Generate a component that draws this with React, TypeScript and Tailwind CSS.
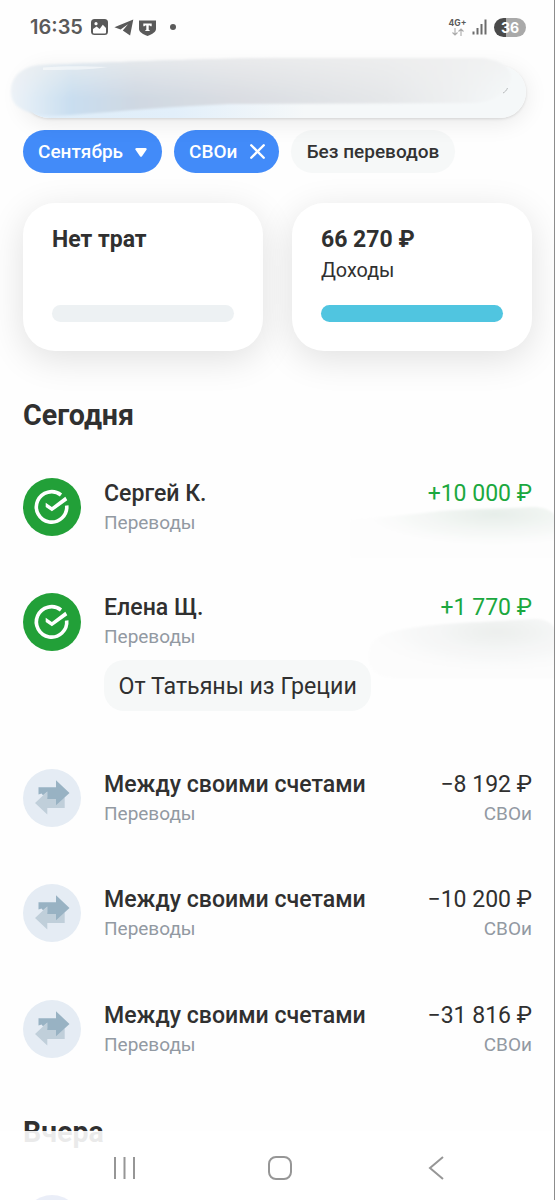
import { X } from "lucide-react";

const transactions = [
  {
    name: "Сергей К.",
    category: "Переводы",
    amount: "+10 000 ₽",
    income: true,
    row: "h-[115px]",
  },
  {
    name: "Елена Щ.",
    category: "Переводы",
    amount: "+1 770 ₽",
    income: true,
    note: "От Татьяны из Греции",
    row: "h-[176px]",
  },
  {
    name: "Между своими счетами",
    category: "Переводы",
    amount: "−8 192 ₽",
    account: "СВОи",
    row: "h-[115px]",
  },
  {
    name: "Между своими счетами",
    category: "Переводы",
    amount: "−10 200 ₽",
    account: "СВОи",
    row: "h-[116px]",
  },
  {
    name: "Между своими счетами",
    category: "Переводы",
    amount: "−31 816 ₽",
    account: "СВОи",
    row: "h-[114px]",
  },
];

function StatusBar() {
  return (
    <header className="flex h-[66px] shrink-0 items-start justify-between pl-[30px] pr-[29px] pt-[16px] text-[#5a5a5a]">
      <div className="flex h-[22px] items-center">
        <span className="w-[53px] whitespace-nowrap font-[Inter] text-[20px] font-semibold leading-[22px]">
          16:35
        </span>
        <svg className="ml-[8px]" width="17" height="16" viewBox="0 0 17 16">
          <rect width="17" height="16" rx="3.5" fill="#5a5a5a" />
          <path d="M2 13.5V10l3.6-2.6 3 2.6 3.2-4.2L15 9v4.500a1 1 0 0 1-1 1H3a1 1 0 0 1-1-1Z" fill="#fff" />
          <circle cx="5" cy="4.700" r="1.600" fill="#fff" />
        </svg>
        <svg className="ml-[6px]" width="20" height="17" viewBox="0 0 20 17">
          <path d="M19.300.6.4 8.200l6.200 2.200L14 5.300 8.800 11.400l7.300 5.200Z" fill="#5a5a5a" />
        </svg>
        <svg className="ml-[5px]" width="17" height="17" viewBox="0 0 17 17">
          <path d="M0 1.500h17V10c0 2.900-3.500 4.900-8.500 7C3.500 14.900 0 12.900 0 10Z" fill="#5a5a5a" />
          <path d="M4.300 4.500h8.400v2.800h-1.200l-.6-.9H9.700v4.400l1 .5v.7H6.300v-.7l1-.5V6.400H6.100l-.6.9H4.300Z" fill="#fff" />
        </svg>
        <span className="ml-[14px] h-[6px] w-[6px] rounded-full bg-[#5a5a5a]" />
      </div>
      <div className="flex h-[22px] items-center">
        <div className="flex w-[19px] flex-col items-center">
          <span className="whitespace-nowrap font-[Inter] text-[8.500px] font-bold leading-[9px]">4G+</span>
          <svg width="12" height="8" viewBox="0 0 12 8" fill="none" stroke="#aaa" strokeWidth="1.100">
            <path d="M3 0v7M.5 4.500 3 7l2.500-2.500M9 8V1M6.500 3.500 9 1l2.500 2.500" />
          </svg>
        </div>
        <svg className="ml-[5px]" width="16" height="16" viewBox="0 0 16 16" fill="#6c6c6c">
          <rect x="0.500" y="12.500" width="2" height="3" />
          <rect x="4.500" y="9" width="2" height="6.500" />
          <rect x="8.500" y="5" width="2" height="10.500" />
          <rect x="12.500" y="0.500" width="2" height="15" />
        </svg>
        <span className="ml-[6px] flex h-[19px] w-[32px] items-center justify-center rounded-full bg-[linear-gradient(90deg,#4a4a4a_36%,#a9a9a9_36%)] font-[Inter] text-[14px] font-bold text-white">
          36
        </span>
      </div>
    </header>
  );
}

function SearchBar() {
  return (
    <div className="relative ml-[23px] h-[52px] w-[503px] shrink-0 rounded-full bg-[linear-gradient(90deg,#deedf9_0%,#e2effa_30%,#f5f8f9_56%)] shadow-[0_1px_3px_rgba(0,0,0,0.12),0_4px_24px_rgba(0,0,0,0.09)]">
      <svg
        className="absolute -left-[23px] -top-[16px]"
        width="555"
        height="84"
        viewBox="0 50 555 84"
      >
        <defs>
          <linearGradient id="smear" x1="0" x2="1">
            <stop offset="0" stopColor="#edf3f8" />
            <stop offset="0.120" stopColor="#c9def0" />
            <stop offset="0.250" stopColor="#cfd8e2" />
            <stop offset="0.450" stopColor="#dadde2" />
            <stop offset="0.750" stopColor="#e5e7e9" />
            <stop offset="0.900" stopColor="#eff1f2" />
            <stop offset="1" stopColor="#f5f8f9" />
          </linearGradient>
          <linearGradient id="smearTop" x1="0" x2="0" y1="0" y2="1">
            <stop offset="0" stopColor="#f0f0f0" stopOpacity="0.700" />
            <stop offset="0.700" stopColor="#f0f0f0" stopOpacity="0" />
          </linearGradient>
          <filter id="edge" x="-5%" y="-20%" width="110%" height="140%">
            <feGaussianBlur stdDeviation="1" />
          </filter>
        </defs>
        <g filter="url(#edge)">
          <path
            d="M40 65C120 62 190 59 278 58L480 58C505 60 517 72 508 86 500 98 488 103 470 103L230 104C180 106 120 111 70 115 40 117 11 113 11 92 11 76 22 67 40 65Z"
            fill="url(#smear)"
          />
          <path
            d="M40 65C120 62 190 59 278 58L480 58C505 60 517 72 508 86 500 98 488 103 470 103L230 104C180 106 120 111 70 115 40 117 11 113 11 92 11 76 22 67 40 65Z"
            fill="url(#smearTop)"
          />
        </g>
        <path d="M43 67.500C65 65.500 85 66 108 67 90 70 65 70 43 70Z" fill="#fff" opacity="0.500" />
        <path d="M503 93c2-1 3.500-2.500 4.500-5" fill="none" stroke="#b6b9bb" strokeWidth="1" />
      </svg>
    </div>
  );
}

function Filters() {
  return (
    <div className="mt-[12px] flex h-[43px] shrink-0 gap-[12px] pl-[23px] text-[19px] font-medium">
      <button className="flex w-[139px] items-center rounded-full bg-[#428bf9] pl-[15px] text-white">
        <span className="w-[86px] whitespace-nowrap pt-px text-left">Сентябрь</span>
        <svg className="ml-[11px] mt-px" width="12" height="9" viewBox="0 0 12 9">
          <path d="M1.500 0h9c1 0 1.500 1 1 1.800L7 8.300c-.5.7-1.500.7-2 0L.5 1.800C0 1 .5 0 1.500 0Z" fill="#fff" />
        </svg>
      </button>
      <button className="flex w-[105px] items-center rounded-full bg-[#428bf9] pl-[15px] text-white">
        <span className="w-[48px] whitespace-nowrap pt-px text-left">СВОи</span>
        <X className="ml-[8px]" size={25} strokeWidth={2.3} />
      </button>
      <button className="flex w-[164px] items-center justify-center whitespace-nowrap rounded-full bg-[#f6f8f8] pt-px text-[#333]">
        Без переводов
      </button>
    </div>
  );
}

function Summary() {
  return (
    <div className="mt-[30px] flex h-[148px] shrink-0 gap-[29px] px-[23px] text-[#303030]">
      <div className="flex flex-1 flex-col rounded-[32px] bg-white px-[29px] pt-[23px] shadow-[0_8px_36px_rgba(0,0,0,0.12)]">
        <div className="h-[79px] whitespace-nowrap text-[23px] font-bold leading-[28px]">Нет трат</div>
        <div className="h-[17px] rounded-full bg-[#edf1f3]" />
      </div>
      <div className="flex flex-1 flex-col rounded-[32px] bg-white px-[29px] pt-[23px] shadow-[0_8px_36px_rgba(0,0,0,0.12)]">
        <div className="h-[79px]">
          <div className="whitespace-nowrap text-[23px] font-bold leading-[28px]">66 270 ₽</div>
          <div className="mt-[5px] text-[19.800px] leading-[24px]">Доходы</div>
        </div>
        <div className="h-[17px] rounded-full bg-[#50c5e0]" />
      </div>
    </div>
  );
}

function SberIcon() {
  return (
    <svg className="h-[58px] w-[58px] shrink-0" viewBox="0 0 58 58" fill="none">
      <circle cx="29" cy="29" r="29" fill="#22a038" />
      <path d="M38 17A15.200 15.200 0 1 0 43.700 27.500" stroke="#fff" strokeWidth="3.600" />
      <path d="M22.700 24.800 28.900 28.900 42.300 18.800 44.300 22.300 28.900 33.300 22.700 29Z" fill="#fff" />
    </svg>
  );
}

function TransferIcon() {
  return (
    <svg className="h-[58px] w-[58px] shrink-0" viewBox="0 0 58 58">
      <circle cx="29" cy="29" r="29" fill="#e5ecf4" />
      <path d="M12 34 24.300 22.500V28.500H41.700V39H24.300V45.500Z" fill="#c0cfda" />
      <path d="M15.500 18.300H33V11.300L46.500 24 33 36.300V30H24.300V22.500L20 26.300 18.500 24.500 15.500 25.500Z" fill="#98b2c3" />
    </svg>
  );
}

function Smears() {
  return (
    <svg className="absolute right-0 top-[500px]" width="205" height="190" viewBox="350 500 205 190">
      <defs>
        <radialGradient id="haze1" cx="0.700" cy="0.150" r="0.600">
          <stop offset="0" stopColor="#e6eee9" />
          <stop offset="0.500" stopColor="#f3f6f4" />
          <stop offset="1" stopColor="#fdfdfd" />
        </radialGradient>
        <radialGradient id="haze2" cx="0.680" cy="0.220" r="0.650">
          <stop offset="0" stopColor="#ecefed" />
          <stop offset="0.500" stopColor="#f5f6f6" />
          <stop offset="1" stopColor="#fcfcfc" />
        </radialGradient>
        <filter id="soft">
          <feGaussianBlur stdDeviation="1" />
        </filter>
      </defs>
      <g filter="url(#soft)">
        <path d="M350 520C390 516 410 515 440 511 480 508 510 509 530 507 545 506 557 512 557 522V557H350Z" fill="url(#haze1)" />
        <path d="M369 660C368 643 376 634 400 630 430 623 480 622 535 619 548 619 557 626 557 636V678H395C380 677 370 672 369 660Z" fill="url(#haze2)" />
      </g>
    </svg>
  );
}

function NavBar() {
  return (
    <nav className="absolute inset-x-0 bottom-0 flex h-[69px] justify-between bg-white/90 pl-[113px] pr-[111px] pt-[25px]">
      <svg width="23" height="24" viewBox="0 0 23 24" stroke="#969696" strokeWidth="2">
        <path d="M2 1v22M11.500 1v22M21 1v22" />
      </svg>
      <svg className="-ml-[4px]" width="24" height="24" viewBox="0 0 24 24" fill="none" stroke="#969696" strokeWidth="2">
        <rect x="1" y="1" width="22" height="22" rx="7" />
      </svg>
      <svg width="16" height="24" viewBox="0 0 16 24" fill="none" stroke="#969696" strokeWidth="2">
        <path d="M15 1 2 12l13 11" />
      </svg>
    </nav>
  );
}

export default function App() {
  return (
    <div className="relative flex h-[1200px] w-[555px] flex-col overflow-hidden bg-[#fefefe] font-[Roboto,sans-serif] text-[#303030]">
      <StatusBar />
      <SearchBar />
      <Filters />
      <Summary />

      <h2 className="mt-[47px] h-[80px] shrink-0 pl-[23px] text-[28.600px] font-bold leading-[34px]">Сегодня</h2>

      <div className="flex shrink-0 flex-col">
        {transactions.map((item, idx) => (
          <div key={idx} className={`flex shrink-0 px-[23px] ${item.row}`}>
            {item.income ? <SberIcon /> : <TransferIcon />}
            <div
              className={`ml-[23px] flex flex-1 flex-col items-start whitespace-nowrap ${item.note ? "pt-px" : "pt-[2px]"}`}
            >
              <div className="text-[23.100px] font-medium leading-[28px]">{item.name}</div>
              <div className="mt-[3px] text-[19px] leading-[24px] text-[#9299a2]">{item.category}</div>
              {item.note && (
                <div className="mt-[11px] flex h-[51px] items-center rounded-[20px] bg-[#f6f8f8] px-[14.500px] pt-[2px] text-[23.200px]">
                  {item.note}
                </div>
              )}
            </div>
            <div className={`flex flex-col items-end whitespace-nowrap ${item.note ? "pt-px" : "pt-[2px]"}`}>
              <div
                className={`text-[23px] leading-[28px] ${item.income ? "text-[#1ba83f]" : ""}`}
              >
                {item.amount}
              </div>
              {item.account && (
                <div className="mt-[3px] text-[19px] leading-[24px] text-[#9299a2]">{item.account}</div>
              )}
            </div>
          </div>
        ))}
      </div>

      <h2 className="h-[81px] shrink-0 pl-[23px] text-[28.600px] font-bold leading-[36px]">Вчера</h2>
      <div className="shrink-0 pl-[23px]">
        <div className="h-[58px] w-[58px] rounded-full bg-[#3050b8]" />
      </div>

      <Smears />
      <NavBar />
      {/* Screen edge */}
      <div className="absolute right-0 top-0 h-full w-px bg-[#8c8c8c]" />
    </div>
  );
}
